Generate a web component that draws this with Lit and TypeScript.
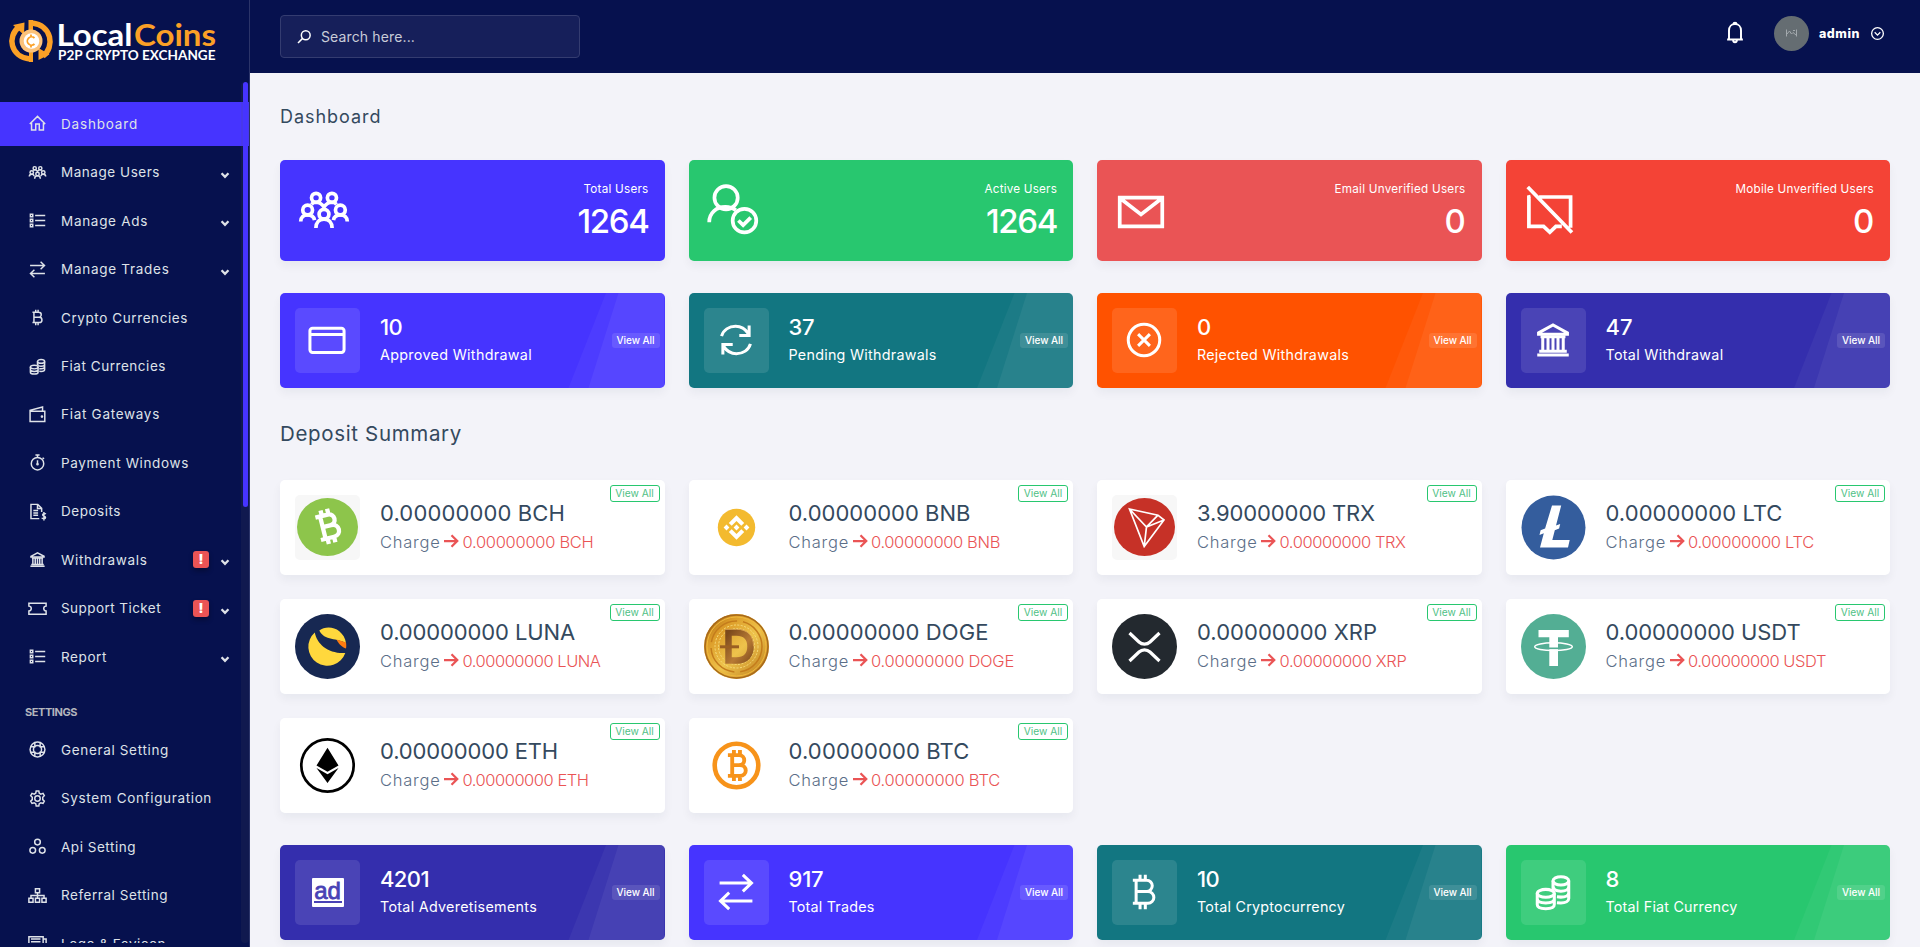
import { LitElement, html, svg, css, TemplateResult } from "lit";
import { customElement, property } from "lit/decorators.js";
import { classMap } from "lit/directives/class-map.js";

/* Line icons, drawn on a 32 unit grid with a 2 unit stroke. */
const icons: Record<string, TemplateResult> = {
  home: svg`<path d="M3 17 16 4l13 13M6 15v12h7V17h6v10h7V15"/>`,
  users: svg`<circle cx="11.3" cy="8.8" r="2.7"/><circle cx="20.7" cy="8.8" r="2.7"/>
    <circle cx="6.3" cy="16" r="2.9"/><circle cx="25.7" cy="16" r="2.9"/><circle cx="16" cy="18.5" r="2.9"/>
    <path d="M2.2 22.8c0-2.400 1.700-3.900 4.100-3.900 2 0 3.700 1.200 4.100 3.100M29.800 22.800c0-2.400-1.700-3.900-4.100-3.900-2 0-3.700 1.200-4.100 3.100M11.200 26.700c0-3.200 2-5.300 4.800-5.300s4.800 2.100 4.800 5.300M8.600 12.600c.6-.8 1.500-1.200 2.700-1.200 2 0 3.400.8 4.700 2.800 1.300-2 2.700-2.800 4.700-2.800 1.200 0 2.100.4 2.700 1.200"/>`,
  list: svg`<path d="M4 5.500h4v4H4zM4 14h4v4H4zM4 22.500h4v4H4zM12 7.500h17M12 16h17M12 24.500h17"/>`,
  exchange: svg`<path d="M3.500 9.200h24M21.200 2.900l6.600 6.300-6.600 6.300M28.500 22.800h-24M10.800 16.500l-6.600 6.300 6.600 6.300"/>`,
  bitcoin: svg`<path d="M7.500 7H18a4.200 4.200 0 0 1 0 8.600H10V7v17.600h9a4.500 4.500 0 0 0 0-9H10M7.500 24.600H10M13 7V2.800M17 7V2.800M13 24.600v4.600M17 24.600v4.600"/>`,
  coins: svg`<ellipse cx="22" cy="7.500" rx="6" ry="3.200"/><path d="M16 7.500v7M28 7.500V21c0 2-2.500 3.400-6 3.400l-3-.3M28 12c0 2-2.500 3.400-6 3.400-2 0-3.500-.4-4.600-1M28 16.500c0 2-2.500 3.400-6 3.400l-3-.3M16 11c0 1.500.6 2.500 1.500 3.200"/>
    <ellipse cx="10.500" cy="17" rx="6.500" ry="3"/><path d="M4 17v8.500c0 2 2.800 3.200 6.500 3.200s6.500-1.200 6.500-3.200V17M4 21.200c0 2 2.800 3.200 6.500 3.200s6.500-1.200 6.500-3.200"/>`,
  wallet: svg`<path d="M3.500 10.500h24.800v17.300H3.500zM3.500 10.500v-1.500L24.500 3.500v7"/><circle cx="23.500" cy="19.500" r="1"/>`,
  stopwatch: svg`<circle cx="16" cy="18" r="10.500"/><path d="M12.500 3.500h7M16 3.500v4M16 12v7M24.500 8l2.500 2"/><circle cx="16" cy="19" r="1"/>`,
  invoice: svg`<path d="M19 28H5V4h11.500L23 10.500V17M16 4v7h7M9 14.500h8M9 18.500h8M9 22.500h8"/><path d="M30 20.500c-.7-1-2-1.400-3.200-1.200-2.800.5-2.800 3.800 0 4.500 3.600.8 3.600 4.300 0 4.500-1.700 0-3-.6-3.600-1.800M26.800 17v14"/>`,
  bank: svg`<path d="M5 10.600 16 4.600l11 6v1H5z"/><path d="M5.500 24.500h21M4 27.500h24M8.200 13v10.500M12.200 13v10.500M16 13v10.500M19.800 13v10.500M23.800 13v10.500M6.500 13.500h19"/>`,
  ticket: svg`<path d="M1.500 7h29v5a4 4 0 0 0 0 8v5.500h-29V20a4 4 0 0 0 0-8z"/>`,
  life: svg`<circle cx="16" cy="16" r="12.500"/><circle cx="16" cy="16" r="6.800"/><path d="M11.500 4.500v7L5 11.500M20.500 4.500v7l6.500 0M11.500 27.500v-7L5 20.500M20.500 27.500v-7l6.500 0"/>`,
  cog: svg`<circle cx="16" cy="16" r="4.600"/><path d="M13.800 3.500h4.400l.8 3.700 2.600 1.400 3.700-1.200 2.200 3.900-2.700 2.700v3.800l2.700 2.700-2.200 3.900-3.700-1.100-2.600 1.400-.8 3.800h-4.400l-.8-3.800-2.600-1.400-3.700 1.100-2.200-3.900 2.700-2.700V14l-2.700-2.700 2.200-3.900 3.700 1.200L13 7.200z"/>`,
  cubes: svg`<circle cx="16" cy="8.500" r="4.800"/><circle cx="8" cy="22.500" r="4.800"/><circle cx="24" cy="22.500" r="4.800"/>`,
  sitemap: svg`<path d="M12.500 4.500h7v7h-7zM1.500 20.500h7v7h-7zM12.500 20.500h7v7h-7zM23.500 20.500h7v7h-7zM16 11.500v9M5 20.500V16h22v4.500"/>`,
  images: svg`<path d="M1.500 4.500h24v19h-24zM25.500 8.500h5v19h-24v-4M5 8.500h16M5 13h16"/>`,
  userCheck: svg`<circle cx="11.900" cy="8.700" r="6.900"/><path d="M1.900 23.200c0-5.400 4.200-9 9.600-9 2.400 0 4.500.7 6.200 2"/><circle cx="22.800" cy="22.300" r="7"/><path d="M19.200 22.200l2.800 2.800 4.500-4.500"/>`,
  envelope: svg`<path d="M3.400 8.700h25.200v17H3.400zM4 9.300l12 9.300 12-9.300"/>`,
  smsSlash: svg`<path d="M2.800 2.400 29 29.300M9.500 8.300h18.700v18.200M23 25.700h-3.500L15.900 29.200 12.200 25.700H3.500V8.300l1-.2"/>`,
  card: svg`<rect x="3" y="7" width="26" height="18.500" rx="2"/><path d="M3 11.800h26"/>`,
  sync: svg`<path d="M5 13C6.300 8.400 10.700 5.500 15.700 5.500c4.300 0 7.600 2.300 9.700 5.600M26 5v7.500h-7.500M27 19c-1.300 4.600-5.700 7.500-10.700 7.500-4.300 0-7.600-2.300-9.700-5.600M6 27v-7.500h7.500"/>`,
  timesCircle: svg`<circle cx="16" cy="16" r="12"/><path d="M11.500 11.500l9 9M20.500 11.500l-9 9"/>`,
  bell: svg`<path d="M5.500 26h21M8 26V14c0-5 3.400-8.600 8-8.600s8 3.600 8 8.600v12M14 5.500C14 3 18 3 18 5.500M13.500 27c.2 3.500 4.800 3.500 5 0"/>`,
  search: svg`<circle cx="19.500" cy="12.500" r="8.800"/><path d="M13.200 18.800 4 28"/>`,
  circleDown: svg`<circle cx="16" cy="16" r="12.500"/><path d="M10 13.500l6 6 6-6"/>`,
  arrow: svg`<path d="M2 16h26M17 4.500 28.500 16 17 27.500"/>`,
  chevron: svg`<path d="M5 10.500 16 21.500 27 10.500"/>`,
};

const bMark = svg`<path d="M-10-12H3c8 0 8 11.500 0 11.500h-7H4C13-.5 13 12 4 12h-14M-5-12v24M-3-12v-6M4-12v-6M-3 12v6M4 12v6" fill="none" stroke-width="4.500"/>`;

/* Coin emblems on a 65 unit square. */
const coins: Record<string, TemplateResult> = {
  BCH: svg`<rect width="65" height="65" rx="5" fill="#f7f7f7"/><ellipse cx="32.500" cy="32" rx="30.500" ry="29" fill="#8dc54b"/><g transform="translate(32.500 31.500) rotate(-14) scale(.96)" stroke="#fff">${bMark}</g>`,
  BNB: svg`<circle cx="32.500" cy="32.500" r="18.700" fill="#f3ba2f"/><path fill="#fff" d="M24.800 27.900 32.500 20.200l7.700 7.700-2.900 2.900-4.800-4.800-4.800 4.800zM24.800 37.100l7.700 7.700 7.700-7.700-2.900-2.900-4.800 4.800-4.800-4.800zM19.600 32.500l2.900-2.900 2.900 2.900-2.900 2.900zM39.600 32.500l2.900-2.900 2.900 2.900-2.900 2.900zM29.600 32.500l2.900-2.900 2.900 2.900-2.900 2.900z"/>`,
  TRX: svg`<rect width="65" height="65" rx="5" fill="#f7f7f7"/><ellipse cx="32.500" cy="32" rx="30.500" ry="29" fill="#c63127"/><path d="M17.500 14 46 20.200l6 4.800L32.200 51.500zM17.500 14 34.500 32 52 25M46 20.200 34.500 32l-2.300 19.500" fill="none" stroke="#fff" stroke-width="1.700"/>`,
  LTC: svg`<circle cx="32.500" cy="32.500" r="32" fill="#345d9d"/><path fill="#fff" d="M31 10.500h9.200l-5.200 20 4.200-1.600-1.100 4.700-4.300 1.700-2.500 9.700h17.400l-1.700 7.500H19l3.800-14.300-4.300 1.700 1.100-4.700 4.500-1.800z"/>`,
  LUNA: svg`<circle cx="32.500" cy="32.500" r="32.500" fill="#172852"/><path fill="#ffd83d" d="M19.800 18.500c2 11.500 13.500 21.500 30.500 20.500A19 19 0 1 1 19.800 18.500z"/><path fill="#ffd83d" d="M24.300 16.500c5-4 14-4.300 20 .8 3.500 3 6 6.700 6.700 11.700-8-5-22-2-26.700-12.500z"/><path fill="#ff7b0f" d="M41.500 25.500 51 28.500c.4 2.500.3 4.500 0 6-4-1.500-7-4-9.500-9z"/>`,
  DOGE: svg`<defs><linearGradient id="gold" x1="0" y1="0" x2="1" y2="1"><stop offset="0" stop-color="#9c5e12"/><stop offset=".25" stop-color="#dc9c28"/><stop offset=".55" stop-color="#eec34c"/><stop offset="1" stop-color="#b87416"/></linearGradient>
    <linearGradient id="bronze" x1="0" y1="0" x2="1" y2="1"><stop offset="0" stop-color="#7c4a1c"/><stop offset=".6" stop-color="#b87a35"/><stop offset="1" stop-color="#8a5420"/></linearGradient></defs>
    <circle cx="32.500" cy="32.500" r="32.500" fill="url(#gold)"/><circle cx="32.500" cy="32.500" r="31.500" fill="none" stroke="#a8691a" stroke-width="1.500"/><circle cx="32.500" cy="32.500" r="29.500" fill="none" stroke="#f0b83c"/><circle cx="32.500" cy="32.500" r="25.500" fill="none" stroke="#c47c1c" stroke-width="1.500" stroke-dasharray="36 6"/><circle cx="32.500" cy="32.500" r="21.500" fill="none" stroke="#f7dc7c" stroke-dasharray="2 1.500"/><circle cx="32.500" cy="32.500" r="18" fill="none" stroke="#f7dc7c" stroke-dasharray="2 1.500"/>
    <path d="M24.500 18.500h8c10 0 14 6 14 14s-4 14-14 14h-8z" fill="none" stroke="url(#bronze)" stroke-width="6.500"/><path d="M16 31.300h19v3H16z" fill="#9a5f22"/><path d="M21 15.300h11.500c11.500 0 17 7 17 17" fill="none" stroke="#d8a04c"/>`,
  XRP: svg`<circle cx="32.500" cy="32.500" r="32.500" fill="#23292f"/><path fill="none" stroke="#fff" stroke-width="3.200" d="M17.500 19 27 28a8 8 0 0 0 11 0l9.500-9M17.500 47 27 38a8 8 0 0 1 11 0l9.500 9"/>`,
  USDT: svg`<circle cx="32.500" cy="32.500" r="32.500" fill="#53ae94"/><path fill="#fff" d="M17.500 16h30.300v7.200H37V52h-8.700V23.200H17.500z"/><ellipse cx="32.500" cy="32.700" rx="18.800" ry="3.900" fill="none" stroke="#fff" stroke-width="1.500"/><path d="M28 33.500v1.600h9.400v-1.600" fill="#53ae94"/>`,
  ETH: svg`<circle cx="32.500" cy="32.500" r="26.200" fill="none" stroke="#000" stroke-width="2.700"/><path d="M32.500 14.800 43.500 32.500 32.500 38.800 21.500 32.500zM32.500 41.300l11-6.300-11 15-11-15z"/>`,
  BTC: svg`<circle cx="32.500" cy="32.500" r="21.800" fill="none" stroke="#f7931a" stroke-width="4.600"/><g transform="translate(32.500 32.500) scale(.86)" stroke="#f7931a">${bMark}</g>`,
};

const icon = (name: string, cls = "") =>
  html`<svg class="icon ${cls}" viewBox="0 0 32 32" fill="none" stroke="currentColor" stroke-width="2">${icons[name]}</svg>`;

/* A label tracked so that it occupies a given width. */
@customElement("tracked-text")
export class TrackedText extends LitElement {
  @property() text = "";
  @property({ type: Number }) width = 0;

  static styles = css`
    :host { display: inline-block; white-space: nowrap; }
    span { display: inline-block; }
  `;

  render() {
    return html`<span>${this.text}</span>`;
  }

  updated() {
    const el = this.renderRoot.querySelector("span") as HTMLElement;
    el.style.letterSpacing = "0px";
    const gap = (this.width - el.getBoundingClientRect().width) / this.text.length;
    el.style.letterSpacing = `${gap.toFixed(3)}px`;
  }
}

const tx = (text: string, width: number, cls = "") =>
  html`<tracked-text class=${cls} .text=${text} .width=${width}></tracked-text>`;

type NavItem = { icon: string; label: string; w: number; more?: boolean; alert?: boolean; active?: boolean };

const mainNav: NavItem[] = [
  { icon: "home", label: "Dashboard", w: 77, active: true },
  { icon: "users", label: "Manage Users", w: 99, more: true },
  { icon: "list", label: "Manage Ads", w: 87, more: true },
  { icon: "exchange", label: "Manage Trades", w: 108.5, more: true },
  { icon: "bitcoin", label: "Crypto Currencies", w: 127 },
  { icon: "coins", label: "Fiat Currencies", w: 105 },
  { icon: "wallet", label: "Fiat Gateways", w: 99 },
  { icon: "stopwatch", label: "Payment Windows", w: 128 },
  { icon: "invoice", label: "Deposits", w: 60 },
  { icon: "bank", label: "Withdrawals", w: 86.5, more: true, alert: true },
  { icon: "ticket", label: "Support Ticket", w: 100, more: true, alert: true },
  { icon: "list", label: "Report", w: 46, more: true },
];

const settingsNav: NavItem[] = [
  { icon: "life", label: "General Setting", w: 108 },
  { icon: "cog", label: "System Configuration", w: 151 },
  { icon: "cubes", label: "Api Setting", w: 75 },
  { icon: "sitemap", label: "Referral Setting", w: 107 },
  { icon: "images", label: "Logo & Favicon", w: 105 },
];

const stats = [
  { bg: "blue", icon: "users", label: "Total Users", w: 65, value: "1264", vw: 71 },
  { bg: "green", icon: "userCheck", label: "Active Users", w: 72.5, value: "1264", vw: 71 },
  { bg: "rose", icon: "envelope", label: "Email Unverified Users", w: 131, value: "0", vw: 21 },
  { bg: "red", icon: "smsSlash", label: "Mobile Unverified Users", w: 138.5, value: "0", vw: 21 },
];

const withdrawals = [
  { bg: "blue", icon: "card", value: "10", vw: 22, label: "Approved Withdrawal", w: 152 },
  { bg: "teal", icon: "sync", value: "37", vw: 26, label: "Pending Withdrawals", w: 148 },
  { bg: "orange", icon: "timesCircle", value: "0", vw: 14, label: "Rejected Withdrawals", w: 152 },
  { bg: "purple", icon: "bank", value: "47", vw: 27, label: "Total Withdrawal", w: 118 },
];

const totals = [
  { bg: "purple", icon: "ad", value: "4201", vw: 49, label: "Total Adveretisements", w: 157 },
  { bg: "blue", icon: "exchange", value: "917", vw: 35, label: "Total Trades", w: 86 },
  { bg: "teal", icon: "bitcoin", value: "10", vw: 22, label: "Total Cryptocurrency", w: 148 },
  { bg: "green", icon: "coins", value: "8", vw: 14, label: "Total Fiat Currency", w: 132 },
];

const deposits: [string, string, number, number][] = [
  ["BCH", "0.00000000", 185, 131],
  ["BNB", "0.00000000", 182, 129],
  ["TRX", "3.90000000", 178, 126],
  ["LTC", "0.00000000", 177, 126],
  ["LUNA", "0.00000000", 195, 138],
  ["DOGE", "0.00000000", 200, 143],
  ["XRP", "0.00000000", 180, 127],
  ["USDT", "0.00000000", 195, 138],
  ["ETH", "0.00000000", 178, 126],
  ["BTC", "0.00000000", 181, 129],
];

@customElement("app-root")
export class AppRoot extends LitElement {
  static styles = css`
    :host {
      display: flex;
      height: 947px;
      overflow: hidden;
      background: #f3f3f9;
      font-family: Inter, "Open Sans", sans-serif;
      color: #34495e;
    }
    * { box-sizing: border-box; }
    svg { display: block; flex: none; }

    .sidebar {
      position: relative;
      width: 250px;
      flex: none;
      background: #06114e;
      border-right: 1px solid #2b3469;
      color: #dee2e8;
    }
    .logo { display: block; height: 82px; }
    .nav { height: 861px; padding-top: 20px; overflow: hidden; }
    .item {
      display: flex;
      align-items: center;
      height: 43.7px;
      margin-bottom: 4.750px;
      padding: 0 19px 0 27.500px;
      font-size: 13.500px;
    }
    .item .label { flex: 1; margin-left: 14.500px; }
    .item .nav-icon { width: 19px; height: 19px; stroke-width: 2.500; }
    .item .more { width: 10px; height: 10px; stroke-width: 7.500; margin: 5px 0 0 11px; }
    .active { background: #4634ff; }
    .alert {
      width: 16px; height: 17px;
      border-radius: 3px;
      background: #ea5455;
      color: #fff;
      font-weight: 900; font-size: 13px; line-height: 17px;
      text-align: center;
      box-shadow: 0 3px 5px rgba(0, 0, 0, 0.3);
    }
    .caption { height: 44.800px; padding: 21px 0 0 25px; font-size: 11px; font-weight: 700; line-height: 16px; color: #b3b5bd; }
    .track { position: absolute; right: 0; top: 82px; width: 8px; height: 861px; border-radius: 4px; background: rgba(90, 90, 90, 0.12); }
    .thumb { width: 5px; height: 425px; margin-left: 2px; border-radius: 3px; background: #4634ff; }

    .page { flex: 1; min-width: 0; }
    .topbar {
      display: flex;
      align-items: center;
      height: 73px;
      padding: 0 35px 0 30px;
      background: #06114e;
      color: #fff;
    }
    .search {
      display: flex;
      align-items: center;
      gap: 9px;
      width: 300px; height: 43px;
      padding-left: 15px;
      border: 1px solid #343c70;
      border-radius: 4px;
      background: #161f5a;
      font-size: 14px;
      color: #c9ccd8;
    }
    .search .icon { width: 16px; height: 16px; stroke-width: 3; color: #fff; }
    .spacer { flex: 1; }
    .bell { width: 24px; height: 24px; margin: -9px 27px 0 0; stroke-width: 2.600; }
    .avatar {
      display: flex; align-items: center; justify-content: center;
      width: 35px; height: 35px;
      margin: -7px 10px 0 0;
      border-radius: 50%;
      background: #656d72;
    }
    .admin { margin: -6px 10px 0 0; font-size: 12.500px; font-weight: 800; }
    .circle-down { width: 15px; height: 15px; margin-top: -7px; stroke-width: 2.800; }

    .content { padding: 0 30px; }
    h6 { margin: 0; font-weight: 400; font-size: 18px; line-height: 26px; padding: 31px 0 30px; }
    h5 { margin: 0; font-weight: 400; font-size: 20.500px; line-height: 28px; padding: 32px 0 32px; }
    h6 tracked-text, h5 tracked-text { display: block; }
    .grid { display: grid; grid-template-columns: repeat(4, 1fr); gap: 24px; }
    .spaced { margin-top: 32px; }

    .blue { background: #4634ff; }
    .green { background: #28c76f; }
    .rose { background: #ea5455; }
    .red { background: #f44336; }
    .teal { background: #127681; }
    .orange { background: #ff5200; }
    .purple { background: #342ead; }

    .card { border-radius: 5px; box-shadow: 0 5px 10px rgba(18, 38, 63, 0.05); }
    .stat { display: flex; align-items: center; height: 101px; padding: 0 16px 0 17px; color: #fff; }
    .stat .icon { width: 54px; height: 54px; margin-top: -1px; stroke-width: 2.200; }
    .stat .figures { display: flex; flex-direction: column; align-items: flex-end; margin-left: auto; }
    .stat .label { font-size: 11.700px; line-height: 18px; }
    .stat .value { font-size: 33px; font-weight: 500; line-height: 42px; margin-top: 2px; }

    .widget { position: relative; display: flex; align-items: center; height: 95px; padding: 0 5px 0 15px; color: #fff; overflow: hidden; }
    .shine, .shine::after { position: absolute; inset: 0; background: rgba(255, 255, 255, 0.045); content: ""; }
    .shine { clip-path: polygon(calc(100% - 58.500px) 0, 100% 0, 100% 100%, calc(100% - 96px) 100%); }
    .shine::after { background: rgba(255, 255, 255, 0.055); clip-path: polygon(calc(100% - 46px) 0, 100% 0, 100% 100%, calc(100% - 76px) 100%); }
    .tile { display: flex; align-items: center; justify-content: center; width: 65px; height: 65px; border-radius: 5px; background: rgba(255, 255, 255, 0.11); }
    .tile .icon { width: 42px; height: 42px; margin: -1px 1px 0 0; stroke-width: 2.300; }
    .ad { width: 32px; height: 29px; border-radius: 1px; background: #fff; padding: 2px 2px 0; color: #4942b5; }
    .ad-text { display: block; height: 23px; border-bottom: 2px solid #4942b5; font: 400 24px/22px "Liberation Sans", sans-serif; letter-spacing: 0; text-align: center; -webkit-text-stroke: 0.800px #4942b5; }
    .details { flex: 1; display: flex; flex-direction: column; margin-left: 20px; }
    .widget .value { font-size: 22px; font-weight: 500; line-height: 28px; margin-top: -3px; }
    .widget .label { font-size: 14.300px; line-height: 22px; margin-top: 3px; }
    .pill { position: relative; width: 48px; height: 15px; border-radius: 3px; background: rgba(255, 255, 255, 0.11); font-size: 10px; font-weight: 450; line-height: 15px; text-align: center; }

    .deposit { position: relative; display: flex; align-items: center; height: 95px; padding-left: 15px; background: #fff; }
    .coin { width: 65px; height: 65px; }
    .amount { font-size: 22px; line-height: 28px; margin-top: -2px; }
    .charge { display: flex; align-items: center; font-size: 16.500px; line-height: 24px; margin-top: 3px; color: #5b6e88; font-weight: 350; }
    .charge .icon { width: 16px; height: 16px; stroke-width: 4.500; margin: -2px 3px 0 3px; color: #ea5455; }
    .danger { color: #ea5455; }
    .outline { position: absolute; top: 5px; right: 5px; width: 50px; height: 17px; border: 1px solid #28c76f; border-radius: 3px; color: #4fbf86; font-size: 10.200px; line-height: 15px; text-align: center; }
  `;

  private navItem(i: NavItem) {
    return html`<div class=${classMap({ item: true, active: !!i.active })}>
      ${icon(i.icon, "nav-icon")}
      <div class="label">${tx(i.label, i.w)}</div>
      ${i.alert ? html`<span class="alert">!</span>` : ""}
      ${i.more ? icon("chevron", "more") : ""}
    </div>`;
  }

  private widget(w: (typeof withdrawals)[number]) {
    return html`<div class="card widget ${w.bg}">
      <div class="shine"></div>
      <div class="tile">
        ${w.icon === "ad" ? html`<div class="ad"><span class="ad-text">ad</span></div>` : icon(w.icon)}
      </div>
      <div class="details">${tx(w.value, w.vw, "value")}${tx(w.label, w.w, "label")}</div>
      <div class="pill">${tx("View All", 38)}</div>
    </div>`;
  }

  render() {
    return html`
      <aside class="sidebar">
        <svg class="logo" width="249" height="82" viewBox="0 0 249 82">
          <g fill="none" stroke="#fba026" stroke-width="5.500">
            <path d="M30 59C10 57 7 36 19 27"/><path d="M32 23c20 2 23 24 11 33"/>
          </g>
          <path fill="#fba026" d="M13 25 24.500 22.500 24 35zM38.500 48 49.500 54.500 38.500 60z"/>
          <path fill="#fba026" d="M28.500 20h4.500v11h-4.500zM29 51h4v11h-4z"/>
          <circle cx="31" cy="41" r="11.500" fill="#fcc27a"/><circle cx="31.500" cy="41" r="7.800" fill="#fff"/>
          <path d="M34.500 38a4.200 4.200 0 1 0 0 6M31 34.500v2M31 45.500v2" fill="none" stroke="#fba026" stroke-width="1.800"/>
          <g font-family="Lato, sans-serif" font-weight="700">
            <text x="56.500" y="46" font-size="30" fill="#fff" textLength="76" lengthAdjust="spacingAndGlyphs">Local</text>
            <text x="134" y="46" font-size="30" fill="#fba026" textLength="82" lengthAdjust="spacingAndGlyphs">Coins</text>
            <text x="58" y="60.300" font-size="12.800" fill="#fff" textLength="157.500" lengthAdjust="spacingAndGlyphs">P2P CRYPTO EXCHANGE</text>
          </g>
        </svg>
        <nav class="nav">
          ${mainNav.map((i) => this.navItem(i))}
          <div class="caption">${tx("SETTINGS", 52)}</div>
          ${settingsNav.map((i) => this.navItem(i))}
        </nav>
        <div class="track"><div class="thumb"></div></div>
      </aside>
      <div class="page">
        <header class="topbar">
          <div class="search">${icon("search")}${tx("Search here...", 94)}</div>
          <div class="spacer"></div>
          ${icon("bell", "bell")}
          <div class="avatar">
            <svg width="11" height="8" viewBox="0 0 11 8" fill="none" stroke="#a3a9ad"><path d="M.5.5v7M10.500.5v7M1 5l2.500-3 2 3L7 3.500 10 6M7 1.500h2"/></svg>
          </div>
          ${tx("admin", 41, "admin")} ${icon("circleDown", "circle-down")}
        </header>
        <main class="content">
          <h6>${tx("Dashboard", 101.5)}</h6>
          <section class="grid">
            ${stats.map((s) => html`<div class="card stat ${s.bg}">
              ${icon(s.icon)}
              <div class="figures">${tx(s.label, s.w, "label")}${tx(s.value, s.vw, "value")}</div>
            </div>`)}
          </section>
          <section class="grid spaced">${withdrawals.map((w) => this.widget(w))}</section>
          <h5>${tx("Deposit Summary", 182)}</h5>
          <section class="grid">
            ${deposits.map(([code, amount, aw, cw]) => html`<div class="card deposit">
              <svg class="coin" viewBox="0 0 65 65">${coins[code]}</svg>
              <div class="details">
                ${tx(`${amount} ${code}`, aw, "amount")}
                <div class="charge">${tx("Charge", 60.5)}${icon("arrow")}${tx(`0.00000000 ${code}`, cw, "danger")}</div>
              </div>
              <div class="outline">${tx("View All", 38.500)}</div>
            </div>`)}
          </section>
          <section class="grid spaced">${totals.map((w) => this.widget(w))}</section>
        </main>
      </div>
    `;
  }
}
